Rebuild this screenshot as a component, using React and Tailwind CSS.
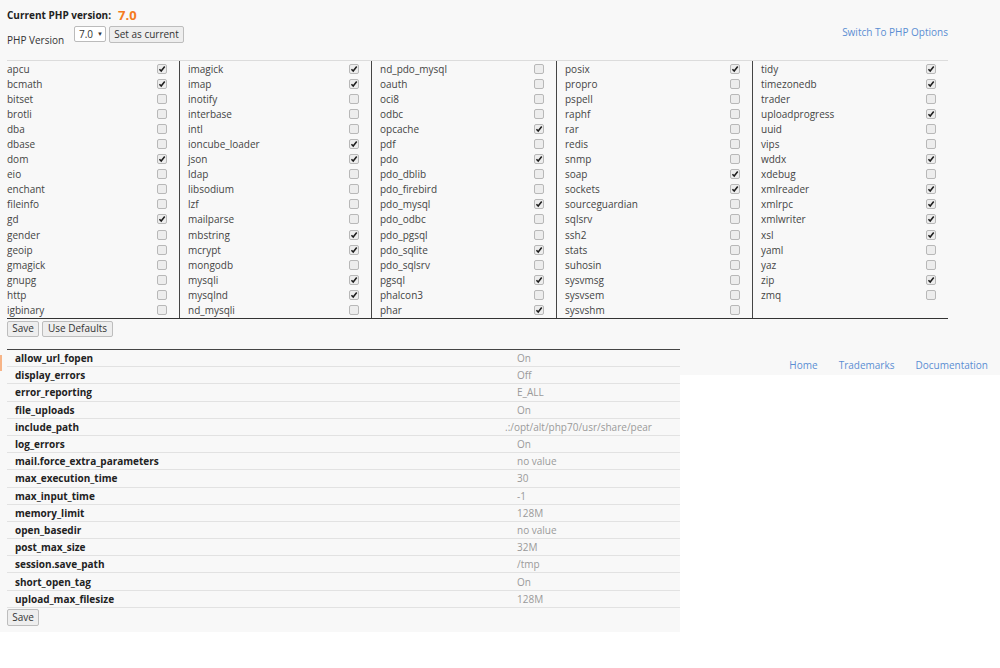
import React from "react";

const columns = [
    [["apcu", 1], ["bcmath", 1], ["bitset"], ["brotli"], ["dba"], ["dbase"], ["dom", 1], ["eio"], ["enchant"], ["fileinfo"], ["gd", 1], ["gender"], ["geoip"], ["gmagick"], ["gnupg"], ["http"], ["igbinary"]],
    [["imagick", 1], ["imap", 1], ["inotify"], ["interbase"], ["intl"], ["ioncube_loader", 1], ["json", 1], ["ldap"], ["libsodium"], ["lzf"], ["mailparse"], ["mbstring", 1], ["mcrypt", 1], ["mongodb"], ["mysqli", 1], ["mysqlnd", 1], ["nd_mysqli"]],
    [["nd_pdo_mysql"], ["oauth"], ["oci8"], ["odbc"], ["opcache", 1], ["pdf"], ["pdo", 1], ["pdo_dblib"], ["pdo_firebird"], ["pdo_mysql", 1], ["pdo_odbc"], ["pdo_pgsql"], ["pdo_sqlite", 1], ["pdo_sqlsrv"], ["pgsql", 1], ["phalcon3"], ["phar", 1]],
    [["posix", 1], ["propro"], ["pspell"], ["raphf"], ["rar"], ["redis"], ["snmp"], ["soap", 1], ["sockets", 1], ["sourceguardian"], ["sqlsrv"], ["ssh2"], ["stats"], ["suhosin"], ["sysvmsg"], ["sysvsem"], ["sysvshm"]],
    [["tidy", 1], ["timezonedb", 1], ["trader"], ["uploadprogress", 1], ["uuid"], ["vips"], ["wddx", 1], ["xdebug"], ["xmlreader", 1], ["xmlrpc", 1], ["xmlwriter", 1], ["xsl", 1], ["yaml"], ["yaz"], ["zip", 1], ["zmq"]],
];

const options = [
    ["allow_url_fopen", "On"],
    ["display_errors", "Off"],
    ["error_reporting", "E_ALL"],
    ["file_uploads", "On"],
    ["include_path", ".:/opt/alt/php70/usr/share/pear"],
    ["log_errors", "On"],
    ["mail.force_extra_parameters", "no value"],
    ["max_execution_time", "30"],
    ["max_input_time", "-1"],
    ["memory_limit", "128M"],
    ["open_basedir", "no value"],
    ["post_max_size", "32M"],
    ["session.save_path", "/tmp"],
    ["short_open_tag", "On"],
    ["upload_max_filesize", "128M"],
];

const Box = ({ on }) => (
    <span className="w-[10px] h-[10px] rounded-[2px] border border-[#b8b8b8] bg-[#ededed] flex items-center justify-center shrink-0">
        {on && (
            <svg viewBox="0 0 10 10" className="w-[8px] h-[8px]">
                <path d="M1.8 5.2 L4 7.6 L8.4 1.8" stroke="#1e1e1e" strokeWidth="1.9" fill="none" />
            </svg>
        )}
    </span>
);

const Btn = ({ children, className = "" }) => (
    <button type="button" className={`h-[16px] px-[4px] whitespace-nowrap flex items-center justify-center text-[10px] text-[#333] bg-[#eeeeee] border border-[#bdbdbd] rounded-[2px] ${className}`}>
        {children}
    </button>
);

export default function App() {
    return (
        <div className="min-h-[668px] bg-white font-['Open_Sans',sans-serif] text-[10px] text-[#333]">
            {/* selector panel */}
            <div className="relative h-[375px] bg-[#f8f8f8] pl-[7px] flex flex-col">
                <div className="w-[941px]">
                    <div className="flex items-center h-[16px] mt-[7px]">
                        <span className="font-bold text-[10px] text-[#222]">Current PHP version:</span>
                        <span className="ml-[7px] font-bold text-[13px] text-[#f47b20] leading-[16px]">7.0</span>
                    </div>
                    <div className="flex items-start mt-[3px] h-[17px]">
                        <span className="w-[67px] mt-[8px] leading-[12px]">PHP Version</span>
                        <span className="h-[16px] w-[32px] bg-white border border-[#bbb] rounded-[2px] flex items-center pl-[4px] gap-[4px] text-[10px]">
                            7.0 <span className="text-[6px]">▼</span>
                        </span>
                        <Btn className="ml-[3px] h-[17px] w-[75px]">Set as current</Btn>
                        <span className="ml-auto leading-[12px] text-[#5b8ed3]">Switch To PHP Options</span>
                    </div>

                    <div className="mt-[17px] grid grid-cols-[172px_192px_185px_196px_196px] border-t border-[#dcdcdc] border-b border-b-[#333]">
                        {columns.map((col, ci) => (
                            <div key={ci} className={ci ? "border-l border-[#444]" : ""}>
                                {col.map(([name, on]) => (
                                    <div key={name} className={`h-[15.1px] flex items-center justify-between pr-[12px] ${ci ? "pl-[8px]" : ""}`}>
                                        <span className="leading-[12px] text-[#444]">{name}</span>
                                        <Box on={on} />
                                    </div>
                                ))}
                            </div>
                        ))}
                    </div>

                    <div className="flex gap-[3px] mt-[2px]">
                        <Btn className="w-[32px]">Save</Btn>
                        <Btn className="w-[71px]">Use Defaults</Btn>
                    </div>
                </div>

                <div className="mt-auto flex justify-end gap-[21px] pr-[12px] pb-[4px] leading-[12px] text-[#5b8ed3]">
                    <span>Home</span>
                    <span>Trademarks</span>
                    <span>Documentation</span>
                </div>
            </div>

            {/* options panel */}
            <div className="relative -mt-[35px] w-[680px] bg-[#f8f8f8] pl-[7px] pt-[9px] pb-[6px]">
                <div className="absolute left-0 top-[15px] w-[2px] h-[16px] bg-[#f7b487]" />
                <div className="border-t border-[#444]">
                    {options.map(([k, v]) => (
                        <div key={k} className="h-[17.2px] flex items-center border-b border-[#e2e2e2]">
                            <span className="w-[510px] pl-[8px] font-bold text-[#222] leading-[12px]">{k}</span>
                            <span className={`leading-[12px] text-[#9a9a9a] whitespace-nowrap ${k === "include_path" ? "-ml-[12px]" : ""}`}>{v}</span>
                        </div>
                    ))}
                </div>
                <Btn className="mt-[1px] h-[17px] w-[32px]">Save</Btn>
            </div>
        </div>
    );
}
